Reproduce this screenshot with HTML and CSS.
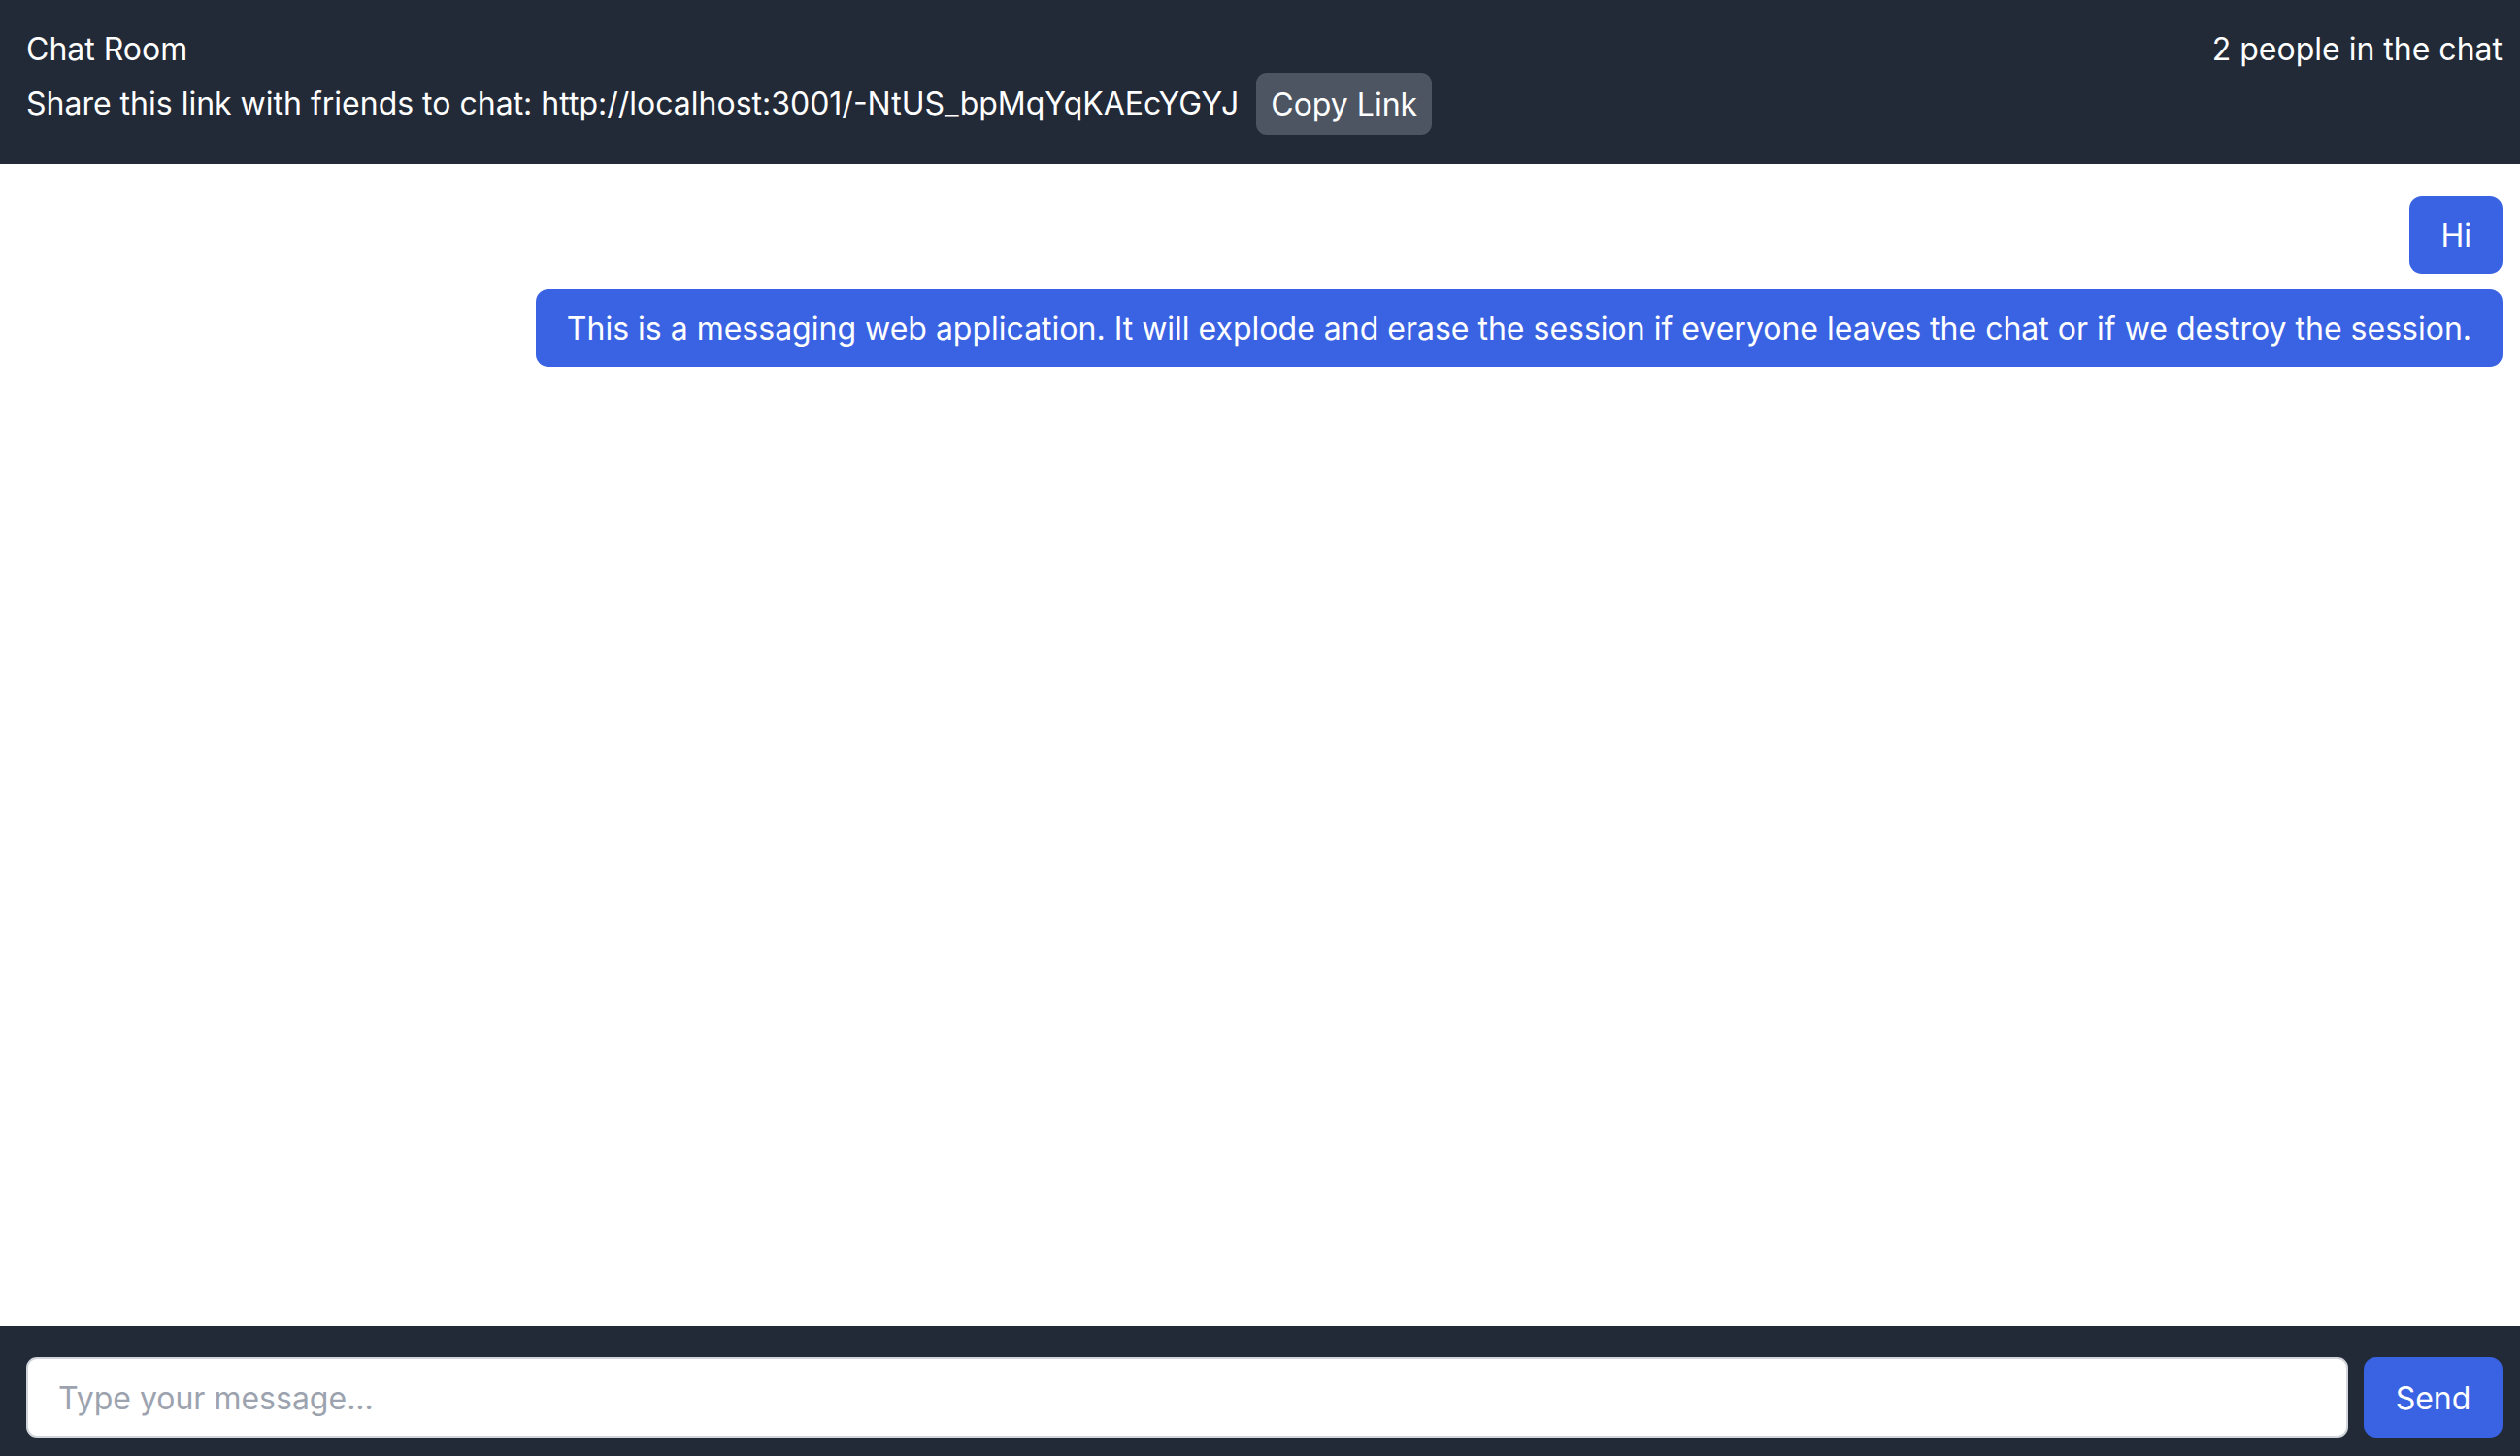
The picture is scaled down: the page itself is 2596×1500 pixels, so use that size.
FILE: index.html
```html
<!DOCTYPE html>
<html lang="en">
<head>
<meta charset="utf-8">
<title>Chat Room</title>
<link rel="stylesheet" href="styles.css">
</head>
<body>
<div class="app">
  <header class="header">
    <div class="row">
      <span class="title">Chat Room</span>
      <span class="count">2 people in the chat</span>
    </div>
    <div class="row share-row">
      <span class="share">Share this link with friends to chat: http://localhost:3001/-NtUS_bpMqYqKAEcYGYJ</span>
      <button class="copy-btn">Copy Link</button>
    </div>
  </header>
  <main class="messages">
    <div class="bubble">Hi</div>
    <div class="bubble">This is a messaging web application. It will explode and erase the session if everyone leaves the chat or if we destroy the session.</div>
  </main>
  <footer class="footer">
    <input class="msg-input" type="text" placeholder="Type your message...">
    <button class="send-btn">Send</button>
  </footer>
</div>
</body>
</html>
```

FILE: styles.css
```css
* {
  box-sizing: border-box;
}

html, body {
  margin: 0;
  padding: 0;
  height: 100%;
}

body {
  font-family: Inter, "Noto Sans", sans-serif;
  font-size: 32px;
  line-height: 46px;
  background: #ffffff;
  color: #ffffff;
}

.app {
  height: 1500px;
  display: flex;
  flex-direction: column;
}

.header {
  background: #222937;
  padding: 28px 18px 30px 27px;
  display: flex;
  flex-direction: column;
  gap: 1px;
}

.row {
  display: flex;
  align-items: center;
  justify-content: space-between;
}

.share-row {
  justify-content: flex-start;
  gap: 18px;
}

.copy-btn {
  font-family: inherit;
  font-size: 32px;
  line-height: 46px;
  color: #ffffff;
  background: #4d5563;
  border: none;
  border-radius: 11px;
  padding: 10px 15px 8px;
  height: 64px;
  cursor: pointer;
}

.messages {
  flex: 1;
  display: flex;
  flex-direction: column;
  align-items: flex-end;
  gap: 16px;
  padding: 33px 18px 0 27px;
  overflow: hidden;
}

.bubble {
  background: #3a63e3;
  color: #ffffff;
  border-radius: 13px;
  padding: 18px 32px 16px;
  max-width: 100%;
}

.footer {
  background: #222937;
  padding: 32px 18px 19px 27px;
  display: flex;
  gap: 16px;
  align-items: stretch;
}

.msg-input {
  flex: 1;
  height: 83px;
  font-family: inherit;
  font-size: 32px;
  border: 2px solid #d1d5db;
  border-radius: 11px;
  padding: 2px 31px 0;
  color: #111827;
  background: #ffffff;
  outline: none;
}

.msg-input::placeholder {
  color: #9ca3af;
}

.send-btn {
  width: 143px;
  height: 83px;
  font-family: inherit;
  font-size: 32px;
  padding-top: 2px;
  color: #ffffff;
  background: #3a63e3;
  border: none;
  border-radius: 13px;
  cursor: pointer;
}
```
